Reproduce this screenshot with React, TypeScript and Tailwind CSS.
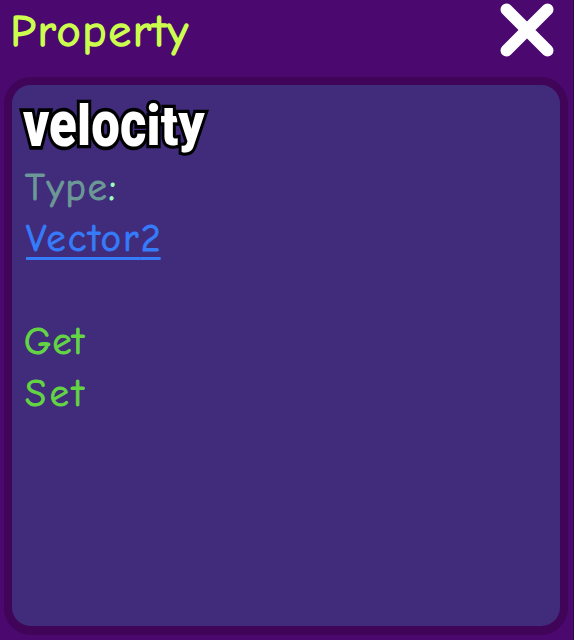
import React from 'react';

const hand =
  "font-['Comic_Sans_MS','Comic_Neue',Lato,sans-serif] whitespace-nowrap";
const line = 'h-[52px] text-[38px] leading-[52px] [-webkit-text-stroke:1px_currentColor]';

function CloseIcon() {
  return (
    <svg width="54" height="54" viewBox="0 0 54 54" fill="none" stroke="white" strokeWidth="12" strokeLinecap="round">
      <path d="M6.5 6.5 47.5 47.5M47.5 6.5 6.5 47.5" />
    </svg>
  );
}

export default function App() {
  return (
    <div className="flex h-[640px] w-[574px] flex-col overflow-hidden border-r border-[#2c0645] bg-[#4b086f] pr-[5px] pb-[5px] pl-1">
      <header className="mb-1 flex h-[73px] shrink-0 items-start justify-between pt-[3px] pr-[14px] pl-[6.5px]">
        <h1 className={`${hand} text-[45px] leading-[56px] tracking-[2px] text-[#ccff4d] [-webkit-text-stroke:1.5px_currentColor]`}>Property</h1>
        <button aria-label="Close">
          <CloseIcon />
        </button>
      </header>
      <main className="flex flex-1 rounded-[27px] bg-[#400459] p-2 pb-[9px]">
        <div className="flex flex-1 flex-col items-start rounded-[18.5px] bg-[#402c7a] pt-[11px] pl-[11px]">
          <h2 className="h-[66px] origin-left scale-x-[0.795] font-[Roboto,sans-serif] text-[64px] leading-[57px] font-black tracking-[0.2px] whitespace-nowrap text-white [-webkit-text-stroke:7.5px_black] [paint-order:stroke_fill]">
            ve<span className="inline-block origin-[50%_76%] scale-y-[0.88]">l</span>oc
            <span className="inline-block origin-[50%_76%] scale-y-[0.88]">it</span>
            <span className="inline-block origin-[50%_25%] scale-y-[0.85]">y</span>
          </h2>
          <p className={`${hand} ${line} pl-[2px] tracking-[1.9px] text-[#6c9897]`}>
            Type<span className="text-[#a0ffc0]">:</span>
          </p>
          <a className={`${hand} ${line} ml-[3px] -mt-px tracking-[2.4px] text-[#357bfa] underline decoration-[3px] underline-offset-[6px]`}>
            Vector<span className="tracking-[0px]">2</span>
          </a>
          <div className="h-[51px]" />
          <p className={`${hand} ${line} pl-px tracking-[1.3px] text-[#63d544]`}>Get</p>
          <p className={`${hand} ${line} pl-[2px] tracking-[3.8px] text-[#63d544]`}>Set</p>
        </div>
      </main>
    </div>
  );
}
